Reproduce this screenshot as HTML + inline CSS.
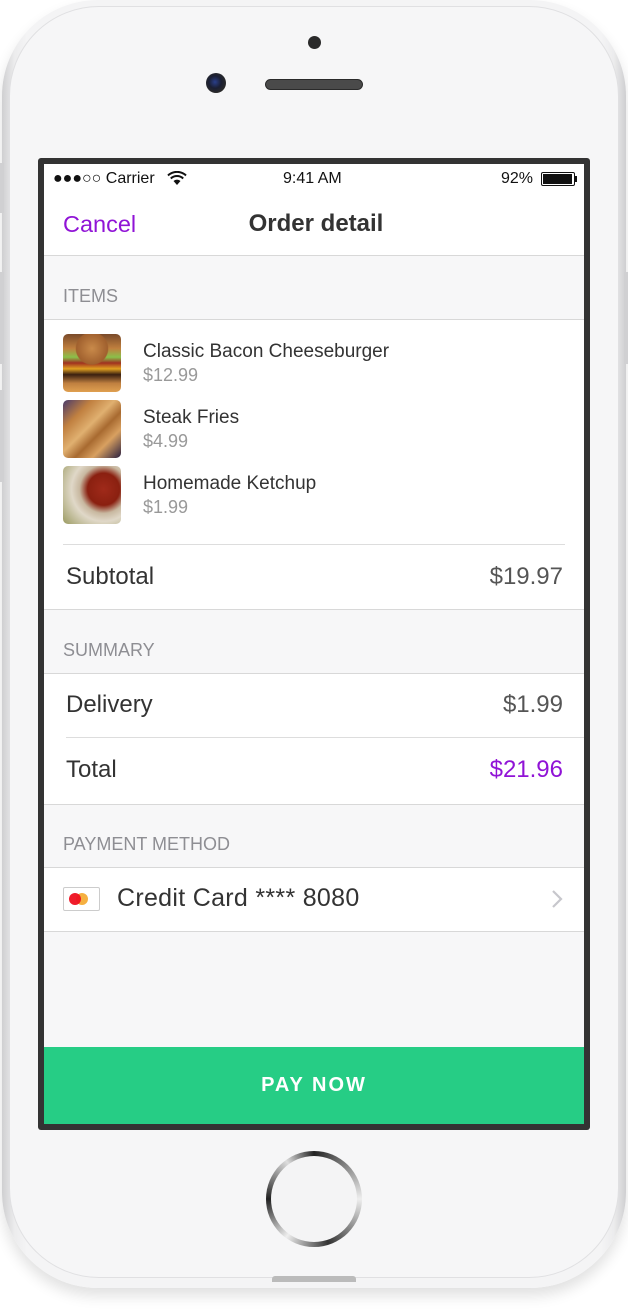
<!DOCTYPE html>
<html><head><meta charset="utf-8"><style>
*{margin:0;padding:0;box-sizing:border-box}
body{width:628px;height:1310px;background:#fff;position:relative;overflow:hidden;font-family:"Liberation Sans",sans-serif;color:#333}
.a{position:absolute}
.t{position:absolute;white-space:nowrap;line-height:1}
</style></head><body>
<div class="a" style="left:2px;top:0;width:624px;height:1288px;border-radius:96px;background:linear-gradient(90deg,#cfcfd1,#ececed 2%,#f4f4f5 4%,#f4f4f5 96%,#ececed 98%,#cfcfd1);box-shadow:0 8px 14px rgba(0,0,0,0.12)"></div>
<div class="a" style="left:9px;top:6px;width:610px;height:1272px;border-radius:90px;background:#f6f6f7;border:1px solid #e0e0e2"></div>
<div class="a" style="left:0;top:163px;width:4px;height:50px;background:#d0d0d2"></div>
<div class="a" style="left:0;top:272px;width:4px;height:92px;background:#d0d0d2"></div>
<div class="a" style="left:0;top:390px;width:4px;height:92px;background:#d0d0d2"></div>
<div class="a" style="left:624px;top:272px;width:4px;height:92px;background:#d0d0d2"></div>
<div class="a" style="left:308px;top:36px;width:13px;height:13px;border-radius:50%;background:#2a2a2a"></div>
<div class="a" style="left:206px;top:73px;width:20px;height:20px;border-radius:50%;background:radial-gradient(circle at 45% 45%,#2a3f8a 0,#1b1f33 40%,#2a2a2a 70%)"></div>
<div class="a" style="left:265px;top:79px;width:98px;height:11px;border-radius:6px;background:#4a4a4a;border:1px solid #2a2a2a"></div>
<div class="a" style="left:266px;top:1151px;width:96px;height:96px;border-radius:50%;background:conic-gradient(#222,#eee 25%,#333 45%,#eee 60%,#222 75%,#ddd 90%,#222);"></div>
<div class="a" style="left:271px;top:1156px;width:86px;height:86px;border-radius:50%;background:#f4f4f5"></div>
<div class="a" style="left:272px;top:1276px;width:84px;height:6px;border-radius:3px 3px 0 0;background:#bbb"></div>
<div class="a" style="left:38px;top:158px;width:552px;height:972px;background:#333;border-radius:3px"></div>
<div class="a" style="left:44px;top:164px;width:540px;height:960px;background:#f7f7f8;overflow:hidden">
  <div class="a" style="left:0;top:0;width:540px;height:92px;background:#fff;border-bottom:1px solid #d8d8d8"></div>
  <div class="t" style="left:9px;top:7px;font-size:16px;color:#111">●●●○○ Carrier</div>
  <svg class="a" style="left:123px;top:7px" width="20" height="15" viewBox="0 0 20 15"><path d="M10 14 L6.5 10 A5 5 0 0 1 13.5 10 Z" fill="#111"/><path d="M3.8 7.5 A9 9 0 0 1 16.2 7.5" stroke="#111" stroke-width="2" fill="none"/><path d="M1 4.5 A13 13 0 0 1 19 4.5" stroke="#111" stroke-width="2" fill="none"/></svg>
  <div class="t" style="left:239px;top:7px;font-size:16px;color:#111">9:41 AM</div>
  <div class="t" style="left:457px;top:7px;font-size:16px;color:#111">92%</div>
  <div class="a" style="left:497px;top:8px;width:34px;height:14px;border:1px solid #111;border-radius:2px;padding:1px"><div style="width:29px;height:10px;background:#111"></div></div>
  <div class="a" style="left:531px;top:12px;width:2px;height:6px;background:#111"></div>
  <div class="t" style="left:19px;top:49px;font-size:23.5px;color:#9013d6">Cancel</div>
  <div class="t" style="left:2px;width:540px;text-align:center;top:48px;font-size:24px;color:#333;font-weight:bold;">Order detail</div>
  <div class="t" style="left:19px;top:123px;font-size:18px;color:#8e8e93">ITEMS</div>
  <div class="a" style="left:0;top:155px;width:540px;height:291px;background:#fff;border-top:1px solid #d8d8d8;border-bottom:1px solid #d8d8d8"></div>
  <div class="a" style="left:19px;top:170px;width:58px;height:58px;border-radius:5px;background:radial-gradient(circle at 50% 25%,#c98a4a 0,#a0602e 30%,transparent 32%),linear-gradient(180deg,#7a4a2a 0,#c0803e 25%,#8ac04a 40%,#a03020 50%,#e0a020 60%,#3a2010 70%,#c08040 85%,#e0a050)"></div>
  <div class="a" style="left:19px;top:236px;width:58px;height:58px;border-radius:5px;background:linear-gradient(135deg,#4a3a6a 0,#c08040 25%,#e0b070 45%,#a86a30 60%,#d8a060 75%,#2a2040)"></div>
  <div class="a" style="left:19px;top:302px;width:58px;height:58px;border-radius:5px;background:radial-gradient(circle at 70% 40%,#a02a1a 0,#8a2010 30%,#c8b8a0 45%,#e0d8c8 60%,#9a9a60 100%)"></div>
  <div class="t" style="left:99px;top:178px;font-size:19px;color:#333">Classic Bacon Cheeseburger</div>
  <div class="t" style="left:99px;top:202px;font-size:18px;color:#999">$12.99</div>
  <div class="t" style="left:99px;top:244px;font-size:19px;color:#333">Steak Fries</div>
  <div class="t" style="left:99px;top:268px;font-size:18px;color:#999">$4.99</div>
  <div class="t" style="left:99px;top:310px;font-size:19px;color:#333">Homemade Ketchup</div>
  <div class="t" style="left:99px;top:334px;font-size:18px;color:#999">$1.99</div>
  <div class="a" style="left:19px;top:380px;width:502px;height:1px;background:#ddd"></div>
  <div class="t" style="left:22px;top:401px;font-size:24px;color:#333">Subtotal</div>
  <div class="t" style="right:21px;top:401px;font-size:24px;color:#555">$19.97</div>
  <div class="t" style="left:19px;top:477px;font-size:18px;color:#8e8e93">SUMMARY</div>
  <div class="a" style="left:0;top:509px;width:540px;height:132px;background:#fff;border-top:1px solid #d8d8d8;border-bottom:1px solid #d8d8d8"></div>
  <div class="t" style="left:22px;top:529px;font-size:24px;color:#333">Delivery</div>
  <div class="t" style="right:21px;top:529px;font-size:24px;color:#555">$1.99</div>
  <div class="a" style="left:22px;top:573px;width:518px;height:1px;background:#ddd"></div>
  <div class="t" style="left:22px;top:594px;font-size:24px;color:#333">Total</div>
  <div class="t" style="right:21px;top:594px;font-size:24px;color:#9013d6">$21.96</div>
  <div class="t" style="left:19px;top:671px;font-size:18px;color:#8e8e93">PAYMENT METHOD</div>
  <div class="a" style="left:0;top:703px;width:540px;height:65px;background:#fff;border-top:1px solid #d8d8d8;border-bottom:1px solid #d8d8d8"></div>
  <div class="a" style="left:19px;top:723px;width:37px;height:24px;border:1px solid #ccc;border-radius:2px;background:#fff"></div>
  <div class="a" style="left:32px;top:729px;width:12px;height:12px;border-radius:50%;background:#f5b040"></div>
  <div class="a" style="left:25px;top:729px;width:12px;height:12px;border-radius:50%;background:#ee1020;opacity:.95"></div>
  <div class="t" style="left:73px;top:722px;font-size:25px;color:#333;letter-spacing:0.3px">Credit Card **** 8080</div>
  <svg class="a" style="left:507px;top:725px" width="12" height="20" viewBox="0 0 12 20"><path d="M2 2 L10 10 L2 18" stroke="#c7c7cc" stroke-width="2.2" fill="none"/></svg>
  <div class="a" style="left:0;top:883px;width:540px;height:77px;background:#26cd85"></div>
  <div class="t" style="left:0;width:540px;text-align:center;top:911px;font-size:20px;color:#fff;letter-spacing:2px;font-weight:bold">PAY NOW</div>
</div>
</body></html>
